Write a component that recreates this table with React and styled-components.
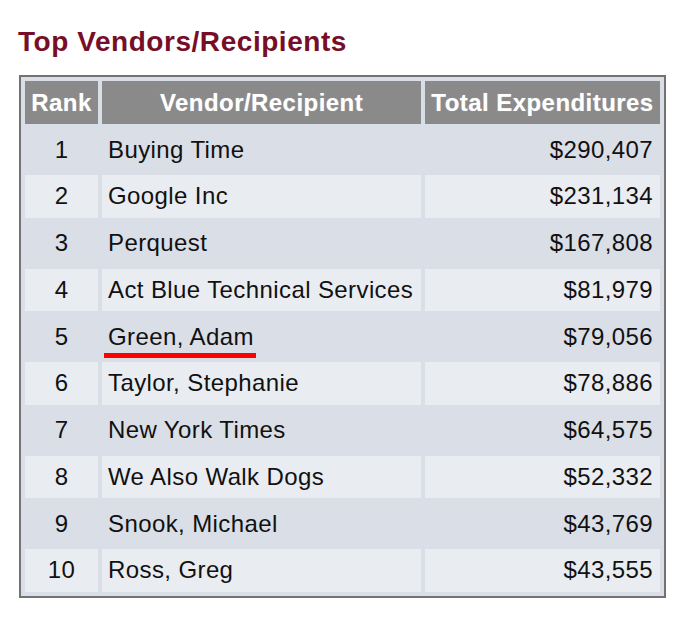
import styled, { createGlobalStyle } from "styled-components";

const GlobalStyle = createGlobalStyle`
  html, body {
    margin: 0;
    padding: 0;
    background: #ffffff;
  }
  body {
    font-family: "Liberation Sans", Arial, Helvetica, sans-serif;
  }
`;

const Page = styled.div`
  width: 688px;
  height: 617px;
  padding: 26px 0 0 18px;
  box-sizing: border-box;
`;

const Title = styled.h2`
  margin: 0 0 17px 0;
  font-size: 28px;
  line-height: 32px;
  letter-spacing: 0.55px;
  font-weight: bold;
  color: #780d28;
`;

const Table = styled.table`
  margin-left: 1px;
  border: 2px solid #737373;
  border-collapse: separate;
  border-spacing: 4px;
  background: #dadee6;
  font-size: 24px;
  letter-spacing: 0.4px;
  color: #111;
`;

const HeadCell = styled.th`
  width: ${(p) => p.w}px;
  height: 43.3px;
  padding: 0;
  background: #8a8a8a;
  color: #fff;
  font-weight: bold;
  text-align: center;
  letter-spacing: 0.45px;
  text-shadow: 0 0 1px rgba(255, 255, 255, 0.4);
`;

const Row = styled.tr`
  background: ${(p) => (p.even ? "#e9edf2" : "#dadee6")};
`;

const Cell = styled.td`
  height: 42.75px;
  padding: ${(p) => (p.align === "right" ? "0 7px 0 0" : p.align === "left" ? "0 0 0 6px" : "0")};
  text-align: ${(p) => p.align || "center"};
  vertical-align: middle;
  white-space: nowrap;
`;

const Marked = styled.span`
  position: relative;
  &::after {
    content: "";
    position: absolute;
    left: -4px;
    right: -2px;
    top: 100%;
    margin-top: 3px;
    height: 5px;
    background: #ff0000;
  }
`;

const rows = [
  ["Buying Time", "$290,407"],
  ["Google Inc", "$231,134"],
  ["Perquest", "$167,808"],
  ["Act Blue Technical Services", "$81,979"],
  ["Green, Adam", "$79,056", true],
  ["Taylor, Stephanie", "$78,886"],
  ["New York Times", "$64,575"],
  ["We Also Walk Dogs", "$52,332"],
  ["Snook, Michael", "$43,769"],
  ["Ross, Greg", "$43,555"],
];

export default function App() {
  return (
    <Page>
      <GlobalStyle />
      <Title>Top Vendors/Recipients</Title>
      <Table>
        <thead>
          <tr>
            <HeadCell w={73}>Rank</HeadCell>
            <HeadCell w={319}>Vendor/Recipient</HeadCell>
            <HeadCell w={235}>Total Expenditures</HeadCell>
          </tr>
        </thead>
        <tbody>
          {rows.map(([name, amount, marked], i) => (
            <Row key={name} even={i % 2 === 1}>
              <Cell>{i + 1}</Cell>
              <Cell align="left">{marked ? <Marked>{name}</Marked> : name}</Cell>
              <Cell align="right">{amount}</Cell>
            </Row>
          ))}
        </tbody>
      </Table>
    </Page>
  );
}
